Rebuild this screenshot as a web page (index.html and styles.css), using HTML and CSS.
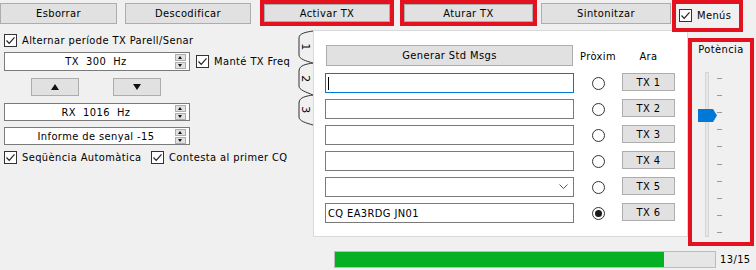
FILE: index.html
```html
<!DOCTYPE html>
<html lang="ca">
<head>
    <meta charset="UTF-8">
    <title>WSJT-X</title>
    <link rel="stylesheet" href="styles.css">
</head>
<body>
    <div class="topbar">
        <button class="btn btn-esborrar">Esborrar</button>
        <button class="btn btn-descod">Descodificar</button>
        <div class="mark mark-activar"><button class="btn">Activar TX</button></div>
        <div class="mark mark-aturar"><button class="btn">Aturar TX</button></div>
        <button class="btn btn-sinton">Sintonitzar</button>
        <div class="mark mark-menus">
            <label class="check"><span class="cb"><svg width="13" height="13"><polyline points="2.5,6.5 5.2,9.3 10.5,3.3" /></svg></span>Menús</label>
        </div>
    </div>

    <div class="main">
        <!-- columna esquerra -->
        <div class="left">
            <label class="check row-alt"><span class="cb"><svg width="13" height="13"><polyline points="2.5,6.5 5.2,9.3 10.5,3.3" /></svg></span>Alternar període TX Parell/Senar</label>

            <div class="row row-tx">
                <div class="spin"><span class="spin-text">TX&nbsp; 300&nbsp; Hz</span><span class="spin-btns"><i class="up"></i><i class="down"></i></span></div>
                <label class="check"><span class="cb"><svg width="13" height="13"><polyline points="2.5,6.5 5.2,9.3 10.5,3.3" /></svg></span>Manté TX Freq</label>
            </div>

            <div class="row row-arrows">
                <button class="btn btn-arrow"><i class="tri-up"></i></button>
                <button class="btn btn-arrow btn-arrow2"><i class="tri-down"></i></button>
            </div>

            <div class="spin spin-rx"><span class="spin-text">RX&nbsp; 1016&nbsp; Hz</span><span class="spin-btns"><i class="up"></i><i class="down"></i></span></div>
            <div class="spin spin-rpt"><span class="spin-text">Informe de senyal -15</span><span class="spin-btns"><i class="up"></i><i class="down"></i></span></div>

            <div class="row row-seq">
                <label class="check check-seq"><span class="cb"><svg width="13" height="13"><polyline points="2.5,6.5 5.2,9.3 10.5,3.3" /></svg></span>Seqüència Automàtica</label>
                <label class="check"><span class="cb"><svg width="13" height="13"><polyline points="2.5,6.5 5.2,9.3 10.5,3.3" /></svg></span>Contesta al primer CQ</label>
            </div>
        </div>

        <!-- pestanyes verticals -->
        <div class="tabs">
            <svg width="16" height="110" viewBox="0 0 16 110">
                <path class="tab" d="M15,65 C9,66 1,67 1,73 L1,87 C1,91 8,93 15,95" />
                <path class="tab" d="M15,33 C9,34 1,35 1,41 L1,56 C1,60 8,62 15,65" />
                <path class="tab" d="M15,1 C9,2 1,3 1,8 L1,25 C1,29 8,31 15,33" />
                <text x="7" y="17" transform="rotate(90 7 17)">1</text>
                <text x="7" y="49" transform="rotate(90 7 49)">2</text>
                <text x="7" y="80" transform="rotate(90 7 80)">3</text>
            </svg>
        </div>

        <!-- missatges -->
        <div class="panel">
            <div class="msgs">
                <button class="btn btn-gen">Generar Std Msgs</button>
                <div class="hdr">Pròxim</div>
                <div class="hdr">Ara</div>

                <div class="field focus"><span class="caret"></span></div>
                <span class="radio"></span>
                <button class="btn btn-tx">TX 1</button>

                <div class="field"></div>
                <span class="radio"></span>
                <button class="btn btn-tx">TX 2</button>

                <div class="field"></div>
                <span class="radio"></span>
                <button class="btn btn-tx">TX 3</button>

                <div class="field"></div>
                <span class="radio"></span>
                <button class="btn btn-tx">TX 4</button>

                <div class="field combo"><svg width="9" height="6"><polyline points="0.5,0.5 4.5,4.5 8.5,0.5" /></svg></div>
                <span class="radio"></span>
                <button class="btn btn-tx">TX 5</button>

                <div class="field">CQ EA3RDG JN01</div>
                <span class="radio on"></span>
                <button class="btn btn-tx">TX 6</button>
            </div>
        </div>

        <!-- potència -->
        <div class="mark mark-pot">
            <div class="pot-title">Potència</div>
            <div class="slider">
                <div class="track"></div>
                <svg class="thumb" width="20" height="13"><path d="M0,0 H15 L19,6.5 L15,13 H0 Z" /></svg>
                <div class="ticks">
                    <i></i><i></i><i></i><i></i><i></i><i></i><i></i><i></i><i></i><i></i>
                </div>
            </div>
        </div>
    </div>

    <div class="progress-row">
        <div class="progress-bar"><div class="progress" style="width: 86.7%"></div></div>
        <span class="progress-label">13/15</span>
    </div>
</body>
</html>
```

FILE: styles.css
```css
* {
    box-sizing: border-box;
    margin: 0;
    padding: 0;
}
body {
    background: #f0f0f0;
    color: #000;
    font-family: 'DejaVu Sans Condensed', 'DejaVu Sans', sans-serif;
    font-size: 11px;
    letter-spacing: 0.4px;
    width: 756px;
    height: 270px;
    overflow: hidden;
}
button {
    font: inherit;
    letter-spacing: inherit;
    color: #000;
}
.btn {
    background: #e1e1e1;
    border: 1px solid #adadad;
    display: flex;
    align-items: center;
    justify-content: center;
}

/* barra superior */
.topbar {
    display: flex;
    align-items: flex-start;
    height: 30px;
}
.topbar > .btn {
    margin-top: 3px;
    height: 21px;
}
.btn-esborrar { width: 117px; }
.btn-descod { width: 126px; margin-left: 8px; }
.btn-sinton { width: 130px; margin-left: 4px; }
.mark {
    border: 4px solid #e3121e;
}
.mark .btn {
    width: 100%;
    height: 100%;
}
.mark-activar { width: 134px; height: 26px; margin-left: 9px; }
.mark-aturar { width: 137px; height: 26px; margin-left: 6px; }
.mark-menus {
    width: 71px;
    height: 32px;
    margin-left: 1px;
    padding: 4px 0 0 3px;
    position: relative;
    z-index: 2;
}

/* checkbox */
.check {
    display: flex;
    align-items: center;
    gap: 5px;
    height: 14px;
    white-space: nowrap;
}
.cb {
    width: 13px;
    height: 13px;
    background: #fff;
    border: 1px solid #333;
    display: block;
    flex: none;
}
.cb svg {
    display: block;
    margin: -1px 0 0 -1px;
}
.cb polyline {
    fill: none;
    stroke: #222;
    stroke-width: 1.2;
}

/* contingut */
.main {
    display: flex;
    align-items: flex-start;
}
.left {
    width: 298px;
    padding-left: 4px;
    display: flex;
    flex-direction: column;
}
.row {
    display: flex;
    align-items: center;
}
.row-alt { margin-top: 3px; }
.row-tx { margin-top: 5px; }
.row-tx .check { margin-left: 6px; }
.spin {
    width: 186px;
    height: 19px;
    background: #fff;
    border: 1px solid #7a7a7a;
    display: flex;
    align-items: center;
    flex: none;
}
.spin-text {
    flex: 1;
    text-align: center;
    padding-left: 12px;
}
.spin-btns {
    width: 11px;
    margin-right: 3px;
    display: flex;
    flex-direction: column;
    gap: 1px;
}
.spin-btns i {
    height: 7px;
    background: #e1e1e1;
    border: 1px solid #adadad;
    position: relative;
}
.spin-btns i::after {
    content: '';
    position: absolute;
    left: 2px;
    border-left: 2.5px solid transparent;
    border-right: 2.5px solid transparent;
}
.spin-btns .up::after { top: 1px; border-bottom: 3px solid #111; }
.spin-btns .down::after { top: 1px; border-top: 3px solid #111; }
.row-arrows { margin-top: 7px; }
.btn-arrow {
    width: 48px;
    height: 18px;
    margin-left: 27px;
}
.btn-arrow2 { margin-left: 34px; }
.tri-up {
    border-left: 4px solid transparent;
    border-right: 4px solid transparent;
    border-bottom: 6px solid #111;
}
.tri-down {
    border-left: 4px solid transparent;
    border-right: 4px solid transparent;
    border-top: 6px solid #111;
}
.spin-rx { margin-top: 7px; height: 18px; }
.spin-rpt { margin-top: 6px; height: 18px; }
.row-seq { margin-top: 5px; }
.check-seq { width: 147px; }

/* pestanyes */
.tabs {
    width: 15px;
    height: 110px;
    position: relative;
    z-index: 1;
}
.tabs svg {
    display: block;
}
.tab {
    fill: #f0f0f0;
    stroke: #333;
    stroke-width: 1;
}
.tabs text {
    font-family: 'DejaVu Sans', sans-serif;
    font-size: 11px;
    text-anchor: middle;
    dominant-baseline: central;
}

/* panell de missatges */
.panel {
    width: 375px;
    height: 207px;
    background: #fff;
    border: 1px solid #d9d9d9;
    padding: 14px 0 0 11px;
}
.msgs {
    display: grid;
    grid-template-columns: 249px 48px 53px;
    grid-template-rows: 22px repeat(6, 20px);
    row-gap: 6px;
    align-items: start;
}
.btn-gen {
    width: 247px;
    height: 21px;
    margin-left: 1px;
}
.hdr {
    text-align: center;
    align-self: center;
    padding-top: 1px;
}
.field {
    height: 20px;
    border: 1px solid #7a7a7a;
    background: #fff;
    display: flex;
    align-items: center;
    padding-left: 2px;
}
.field.focus { border-color: #0078d7; }
.caret {
    width: 1px;
    height: 13px;
    background: #000;
}
.combo {
    justify-content: flex-end;
    padding-right: 5px;
}
.combo polyline {
    fill: none;
    stroke: #555;
    stroke-width: 1;
}
.radio {
    width: 13px;
    height: 13px;
    border: 1px solid #333;
    border-radius: 50%;
    background: #fff;
    justify-self: center;
    align-self: center;
    display: flex;
    align-items: center;
    justify-content: center;
}
.radio.on::after {
    content: '';
    width: 7px;
    height: 7px;
    border-radius: 50%;
    background: #1a1a1a;
}
.btn-tx {
    width: 53px;
    height: 18px;
}

/* potència */
.mark-pot {
    width: 66px;
    height: 208px;
    margin-top: 8px;
    display: flex;
    flex-direction: column;
    align-items: center;
}
.pot-title {
    margin-top: 1px;
    height: 14px;
}
.slider {
    position: relative;
    width: 58px;
    height: 170px;
    margin-top: 15px;
}
.track {
    position: absolute;
    left: 13px;
    top: 0;
    width: 4px;
    height: 165px;
    background: #e7e7e7;
    border: 1px solid #d6d6d6;
}
.thumb {
    position: absolute;
    left: 6px;
    top: 37px;
}
.thumb path { fill: #0078d7; }
.ticks {
    position: absolute;
    left: 25px;
    top: 6px;
    height: 155px;
    display: flex;
    flex-direction: column;
    justify-content: space-between;
}
.ticks i {
    width: 5px;
    height: 1px;
    background: #9a9a9a;
}

/* progrés */
.progress-row {
    display: flex;
    align-items: center;
    margin: 5px 0 0 334px;
}
.progress-bar {
    width: 382px;
    height: 17px;
    background: #e6e6e6;
    border: 1px solid #bcbcbc;
}
.progress {
    height: 100%;
    background: #06b025;
}
.progress-label {
    margin-left: 4px;
}
```
